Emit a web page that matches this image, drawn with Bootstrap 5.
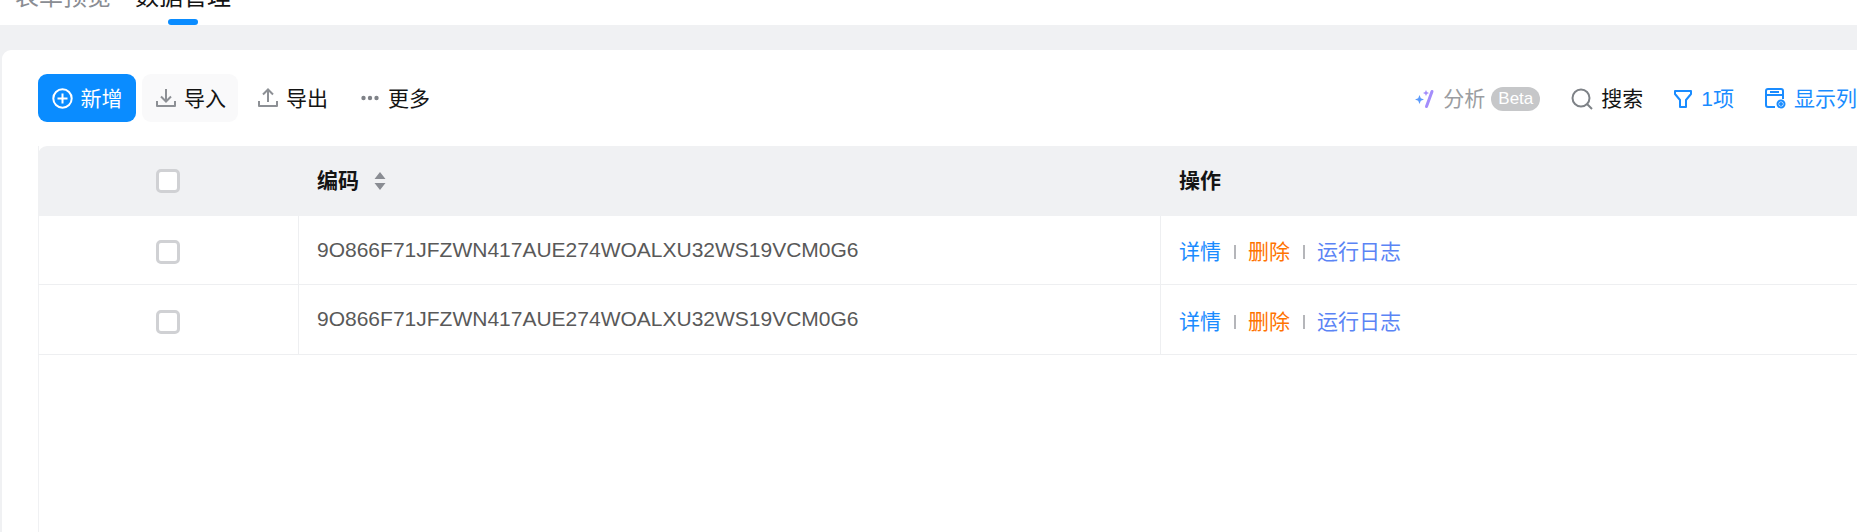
<!DOCTYPE html>
<html lang="zh-CN">
<head>
  <meta charset="UTF-8" />
  <title>数据管理</title>
  <link href="https://cdn.jsdelivr.net/npm/bootstrap@5.3.0/dist/css/bootstrap.min.css" rel="stylesheet"/>
  <style>
    html, body {
      height: 532px;
      overflow: hidden;
    }
    body {
      background: #f0f1f3;
      font-family: "Liberation Sans", "Noto Sans CJK SC", sans-serif;
      font-size: 21px;
      color: #141414;
    }
    .top-tabs {
      height: 25px;
      background: #fff;
      overflow: hidden;
      gap: 24px;
      padding-left: 15px;
    }
    .top-tab {
      font-size: 24px;
      line-height: 24px;
      margin-top: -15px;
      height: 40px;
      color: #8a8d93;
      position: relative;
    }
    .top-tab.is-active {
      color: #141414;
    }
    .top-tab.is-active::after {
      content: "";
      position: absolute;
      left: 33px;
      bottom: 0;
      width: 30px;
      height: 6px;
      border-radius: 3px;
      background: #0a8cff;
    }
    .main-panel {
      width: 2000px;
      height: 482px;
      margin: 25px 0 0 2px;
      padding: 24px 36px 0;
      background: #fff;
      border-radius: 9px 0 0 0;
    }
    .tool-row {
      height: 48px;
      margin-bottom: 24px;
    }
    .tool-btn {
      height: 48px;
      padding: 0 14px;
      gap: 8px;
      font-size: 21px;
      line-height: 1;
      white-space: nowrap;
      border: 0;
      border-radius: 9px;
      color: #141414;
      background: transparent;
    }
    .tool-btn svg {
      flex: none;
    }
    .tool-btn.btn-add {
      background: #0a8cff;
      color: #fff;
      width: 98px;
      padding: 0;
    }
    .tool-btn.btn-import {
      background: #f9f9fa;
      width: 96px;
      margin-left: 6px;
      padding-right: 0;
    }
    .tool-btn.btn-export {
      margin-left: 6px;
    }
    .tool-btn.btn-more {
      margin-left: 5px;
      gap: 9px;
    }
    .right-tools {
      width: 1819px;
      gap: 31px;
      padding-top: 1px;
    }
    .tool-gap { margin-right: 8px; }
    .filter-gap { margin-right: 9px; }
    .grey-text { color: #9b9da1; }
    .blue-text { color: #1a8cff; }
    .beta-tag {
      background: #c6c7c9;
      color: #fff;
      font-size: 17px;
      line-height: 24px;
      border-radius: 12px;
      padding: 0 7px;
      margin-left: 6px;
    }
    .data-wrap {
      width: 1962px;
      height: 400px;
      border-left: 1px solid #f0f1f3;
    }
    .data-head {
      height: 70px;
      background: #f0f1f3;
      border-radius: 9px 0 0 0;
      margin-left: -1px;
      font-weight: 700;
    }
    .data-row {
      height: 69px;
      margin-left: -1px;
      border-bottom: 1px solid #eeeff1;
      color: #595959;
    }
    .data-row:last-child {
      height: 70px;
    }
    .cell-check {
      width: 260px;
      flex: none;
    }
    .cell-code {
      width: 862px;
      flex: none;
      padding-left: 18px;
    }
    .cell-ops {
      padding-left: 18px;
    }
    .data-row .cell-code, .data-row .cell-ops {
      border-left: 1px solid #eeeff1;
      height: 100%;
    }
    .data-head .cell-code { padding-left: 19px; }
    .data-head .cell-ops { padding-left: 19px; }
    .data-row .box-check { margin-top: 4px; }
    .sort-mark { margin-left: 15px; }
    .code-text {
      margin-top: -1px;
    }
    .op-links {
      margin-top: 4px;
    }
    .box-check {
      width: 24px;
      height: 24px;
      border: 3px solid #d0d1d4;
      border-radius: 5px;
      background: #fff;
    }
    .op-blue { color: #1a8cff; }
    .op-orange { color: #ff7300; }
    .op-indigo { color: #5b84f5; }
    .op-sep {
      width: 2px;
      height: 14px;
      background: #b5b6ba;
      margin: 0 12.5px;
    }
  </style>
</head>
<body>
  <div class="top-tabs d-flex">
    <div class="top-tab">表单预览</div>
    <div class="top-tab is-active">数据管理</div>
  </div>

  <div class="main-panel">
    <div class="tool-row d-flex align-items-center position-relative">
      <button class="btn tool-btn btn-add d-flex align-items-center justify-content-center" type="button">
        <svg width="21" height="21" viewBox="0 0 21 21" fill="none" stroke="#fff" stroke-width="2"><circle cx="10.5" cy="10.5" r="9.2"/><path d="M10.5 5.5v10M5.5 10.5h10"/></svg>
        新增
      </button>
      <button class="btn tool-btn btn-import d-flex align-items-center" type="button">
        <svg width="20" height="20" viewBox="0 0 20 20" fill="none" stroke="#8d9095" stroke-width="2"><path d="M10 1v12M5 8.5l5 5 5-5"/><path d="M1 13v5h18v-5" stroke-linejoin="round"/></svg>
        导入
      </button>
      <button class="btn tool-btn btn-export d-flex align-items-center" type="button">
        <svg width="20" height="20" viewBox="0 0 20 20" fill="none" stroke="#8d9095" stroke-width="2"><path d="M10 14V2M5 6.5l5-5 5 5"/><path d="M1 13v5h18v-5" stroke-linejoin="round"/></svg>
        导出
      </button>
      <button class="btn tool-btn btn-more d-flex align-items-center" type="button">
        <svg width="18" height="6" viewBox="0 0 18 6" fill="#7f8288"><circle cx="2.5" cy="3" r="2.2"/><circle cx="9" cy="3" r="2.2"/><circle cx="15.5" cy="3" r="2.2"/></svg>
        更多
      </button>
      <div class="right-tools position-absolute top-0 start-0 h-100 d-flex align-items-center justify-content-end">
        <span class="d-flex align-items-center grey-text">
          <svg class="tool-gap" width="20" height="22" viewBox="0 0 20 22">
            <path d="M17 3.500L11.500 18.500" fill="none" stroke="#a48dfb" stroke-width="3" stroke-linecap="round"/>
            <path d="M11 2l.9 2.100L14 5l-2.100.9L11 8l-.9-2.100L8 5l2.100-.9z" fill="#a48dfb"/>
            <path d="M4.500 7l1.300 3.200L9 11.500l-3.200 1.300L4.500 16l-1.300-3.200L0 11.500l3.200-1.300z" fill="#5c9bfb"/>
          </svg>
          分析
          <span class="beta-tag">Beta</span>
        </span>
        <span class="d-flex align-items-center">
          <svg class="tool-gap" width="22" height="22" viewBox="0 0 22 22" fill="none" stroke="#7e8287" stroke-width="2"><circle cx="10" cy="10" r="8.500"/><path d="M16 16l5 5"/></svg>
          搜索
        </span>
        <span class="d-flex align-items-center blue-text">
          <svg class="filter-gap" width="18" height="20" viewBox="0 0 18 20" fill="none" stroke="#1a8cff" stroke-width="2" stroke-linejoin="round"><path d="M1 2h16v3l-5 6v7H6v-7L1 5z"/></svg>
          1项
        </span>
        <span class="d-flex align-items-center blue-text text-nowrap">
          <svg class="tool-gap" width="21" height="21" viewBox="0 0 21 21" fill="none" stroke="#1a8cff" stroke-width="2"><path d="M10 19H3a2 2 0 0 1-2-2V3a2 2 0 0 1 2-2h13a2 2 0 0 1 2 2v8M1 7h17M5 4h9"/><circle cx="16" cy="16" r="3.500"/><circle cx="16" cy="16" r="1" fill="#1a8cff"/></svg>
          显示列
        </span>
      </div>
    </div>

    <div class="data-wrap">
      <div class="data-head d-flex align-items-center">
        <div class="cell-check d-flex justify-content-center"><div class="box-check"></div></div>
        <div class="cell-code d-flex align-items-center">
          编码
          <svg class="sort-mark" width="12" height="18" viewBox="0 0 12 18" fill="#8a8d93"><path d="M6 0l5.500 7H.5zM6 18l5.500-7H.5z"/></svg>
        </div>
        <div class="cell-ops">操作</div>
      </div>
      <div class="data-row d-flex align-items-center">
        <div class="cell-check d-flex justify-content-center"><div class="box-check"></div></div>
        <div class="cell-code d-flex align-items-center"><span class="code-text">9O866F71JFZWN417AUE274WOALXU32WS19VCM0G6</span></div>
        <div class="cell-ops d-flex align-items-center">
          <div class="op-links d-flex align-items-center"><span class="op-blue">详情</span><span class="op-sep"></span><span class="op-orange">删除</span><span class="op-sep"></span><span class="op-indigo">运行日志</span></div>
        </div>
      </div>
      <div class="data-row d-flex align-items-center">
        <div class="cell-check d-flex justify-content-center"><div class="box-check"></div></div>
        <div class="cell-code d-flex align-items-center"><span class="code-text">9O866F71JFZWN417AUE274WOALXU32WS19VCM0G6</span></div>
        <div class="cell-ops d-flex align-items-center">
          <div class="op-links d-flex align-items-center"><span class="op-blue">详情</span><span class="op-sep"></span><span class="op-orange">删除</span><span class="op-sep"></span><span class="op-indigo">运行日志</span></div>
        </div>
      </div>
    </div>
  </div>
  <script src="https://cdn.jsdelivr.net/npm/bootstrap@5.3.0/dist/js/bootstrap.bundle.min.js"></script>
</body>
</html>
